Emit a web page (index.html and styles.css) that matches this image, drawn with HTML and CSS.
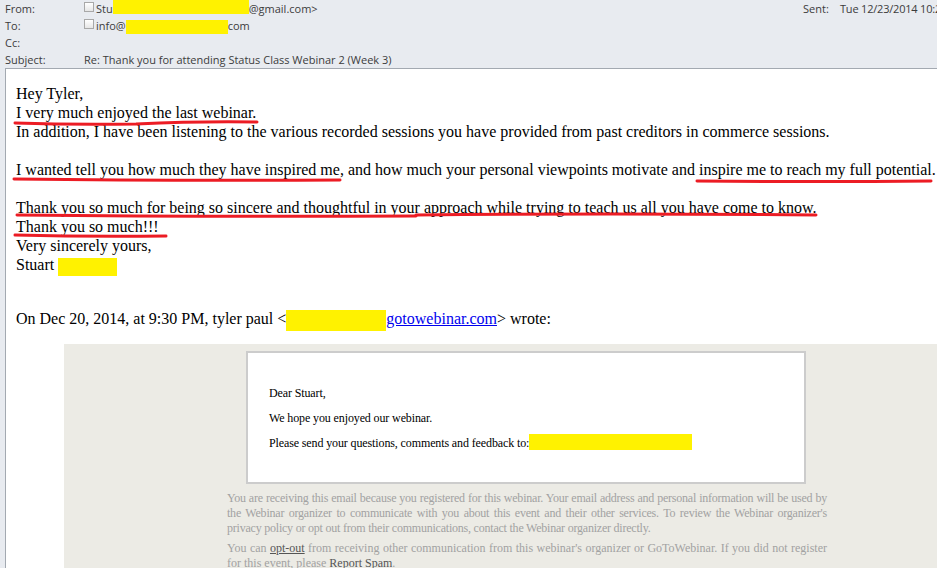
FILE: index.html
```html
<!DOCTYPE html>
<html>
<head>
  <link rel="stylesheet" href="styles.css">
</head>
<body>
  <div class="mail-window">
    <!-- Message header fields -->
    <div class="mail-header">
      <div class="mail-header-row">
        <span class="mail-header-label">From:</span>
        <span class="mail-header-value"><span class="mail-check"></span>Stu<span class="redact redact-from"></span>@gmail.com&gt;</span>
        <span class="mail-sent"><span class="mail-sent-label">Sent:</span>Tue 12/23/2014 10:25 AM</span>
      </div>
      <div class="mail-header-row">
        <span class="mail-header-label">To:</span>
        <span class="mail-header-value"><span class="mail-check"></span>info@<span class="redact redact-to"></span>com</span>
      </div>
      <div class="mail-header-row">
        <span class="mail-header-label">Cc:</span>
        <span class="mail-header-value"></span>
      </div>
      <div class="mail-header-row">
        <span class="mail-header-label">Subject:</span>
        <span class="mail-header-value">Re: Thank you for attending Status Class Webinar 2 (Week 3)</span>
      </div>
    </div>

    <!-- Message body -->
    <div class="mail-body">
      <div class="mail-text">
        <div>Hey Tyler,</div>
        <div>I very much enjoyed the last webinar.</div>
        <div>In addition, I have been listening to the various recorded sessions you have provided from past creditors in commerce sessions.</div>
        <div class="blank">&nbsp;</div>
        <div>I wanted tell you how much they have inspired me, and how much your personal viewpoints motivate and inspire me to reach my full potential.</div>
        <div class="blank">&nbsp;</div>
        <div>Thank you so much for being so sincere and thoughtful in your approach while trying to teach us all you have come to know.</div>
        <div>Thank you so much!!!</div>
        <div>Very sincerely yours,</div>
        <div>Stuart <span class="redact redact-name"></span></div>
      </div>

      <div class="mail-quote-intro">On Dec 20, 2014, at 9:30 PM, tyler paul &lt;<span class="redact redact-link"></span><a href="#" class="mail-link">gotowebinar.com</a>&gt; wrote:</div>

      <!-- Quoted webinar email -->
      <div class="quote-area">
        <div class="quote-inner">
          <div class="quote-card">
            <p>Dear Stuart,</p>
            <p>We hope you enjoyed our webinar.</p>
            <p>Please send your questions, comments and feedback to:<span class="redact redact-feedback"></span></p>
          </div>
          <div class="quote-footer">
            <p>You are receiving this email because you registered for this webinar. Your email address and personal information will be used by the Webinar organizer to communicate with you about this event and their other services. To review the Webinar organizer's privacy policy or opt out from their communications, contact the Webinar organizer directly.</p>
            <p class="quote-footer-optout">You can <a href="#" class="footer-link">opt-out</a> from receiving other communication from this webinar's organizer or GoToWebinar. If you did not register for this event, please <a href="#" class="footer-link">Report Spam</a>.</p>
          </div>
        </div>
      </div>
    </div>

    <!-- Hand-drawn red marks over the text -->
    <svg class="marks" width="937" height="568" viewBox="0 0 937 568">
      <g fill="none" stroke="#ec1c24" stroke-width="3" stroke-linecap="round">
        <path d="M15 123 Q75 125 136 124 Q200 121 257 122"/>
        <path d="M14 179 Q170 181 340 180"/>
        <path d="M697 181 Q815 182 931 181"/>
        <path d="M17 215 Q210 217 416 216"/>
        <path d="M416 215 Q610 213 816 215"/>
        <path d="M15 235 Q90 237 166 236"/>
      </g>
    </svg>
  </div>
</body>
</html>
```

FILE: styles.css
```css
/* Page setup */
body {
  margin: 0;
  background-color: #e8ebf0;
  overflow: hidden;
}

.mail-window {
  position: relative;
  width: 937px;
  height: 568px;
  overflow: hidden;
}

/* Header fields */
.mail-header {
  height: 68px;
  padding-left: 5px;
  font-family: "Open Sans", "Liberation Sans", sans-serif;
  font-size: 11px;
  color: #3c3c3c;
  box-sizing: border-box;
}

.mail-header-row {
  display: flex;
  align-items: center;
  height: 17px;
  white-space: nowrap;
}

.mail-header-label {
  width: 79px;
  flex-shrink: 0;
}

.mail-header-value {
  flex-grow: 1;
  display: flex;
  align-items: center;
  height: 17px;
}

.mail-check {
  display: inline-block;
  width: 8px;
  height: 8px;
  margin-right: 2px;
  margin-top: -4px;
  border: 1px solid #a8a8a8;
  background: linear-gradient(#ffffff, #e6e6e6);
}

.mail-sent {
  width: 134px;
  flex-shrink: 0;
  overflow: hidden;
  letter-spacing: -0.2px;
}

.mail-sent-label {
  display: inline-block;
  width: 37px;
  letter-spacing: 0;
}

/* Redacted (highlighted) parts */
.redact {
  display: inline-block;
  background-color: #fff200;
  vertical-align: baseline;
}

.redact-from {
  width: 136px;
  height: 16px;
  margin-top: -6px;
}

.redact-to {
  width: 102px;
  height: 14px;
  margin-top: 3px;
}

.redact-name {
  width: 59px;
  height: 18px;
  margin: -6px 0 -6px 0;
}

.redact-link {
  width: 100px;
  height: 21px;
  margin: -7px 0 -7px 0;
}

.redact-feedback {
  width: 163px;
  height: 16px;
  margin: -3px 0 -3px 0;
}

/* Message body */
.mail-body {
  margin-left: 5px;
  height: 500px;
  border-left: 1px solid #a3a9b1;
  border-top: 1px solid #a3a9b1;
  background-color: #ffffff;
  font-family: "Liberation Serif", "Times New Roman", serif;
  color: #000000;
}

.mail-text {
  padding: 15px 0 0 10px;
  font-size: 16px;
  line-height: 19px;
  white-space: nowrap;
}

.mail-quote-intro {
  margin-top: 35px;
  padding-left: 10px;
  font-size: 16px;
  line-height: 19px;
  white-space: nowrap;
}

.mail-link {
  color: #0000ee;
  text-decoration: underline;
}

/* Quoted email */
.quote-area {
  margin: 16px 0 0 58px;
  width: 930px;
  height: 240px;
  background-color: #ecebe5;
  padding-top: 7px;
  box-sizing: border-box;
}

.quote-inner {
  width: 600px;
  margin-left: 163px;
}

.quote-card {
  width: 560px;
  margin-left: 19px;
  padding: 34px 0 32px 21px;
  border: 2px solid #cccccc;
  background-color: #ffffff;
  box-sizing: border-box;
  font-size: 12px;
  line-height: 13px;
  letter-spacing: -0.12px;
}

.quote-card p {
  margin: 0 0 12px 0;
  white-space: nowrap;
}

.quote-card p:last-child {
  margin-bottom: 0;
}

.quote-footer {
  margin-top: 7px;
  font-size: 12px;
  line-height: 15px;
  letter-spacing: -0.22px;
  color: #a2a2a2;
  text-align: justify;
}

.quote-footer p {
  margin: 0 0 5px 0;
}

.quote-footer-optout {
  letter-spacing: 0;
}

.footer-link {
  color: #555555;
  text-decoration: underline;
}

/* Red marker strokes drawn over the text */
.marks {
  position: absolute;
  left: 0;
  top: 0;
  pointer-events: none;
}
```
